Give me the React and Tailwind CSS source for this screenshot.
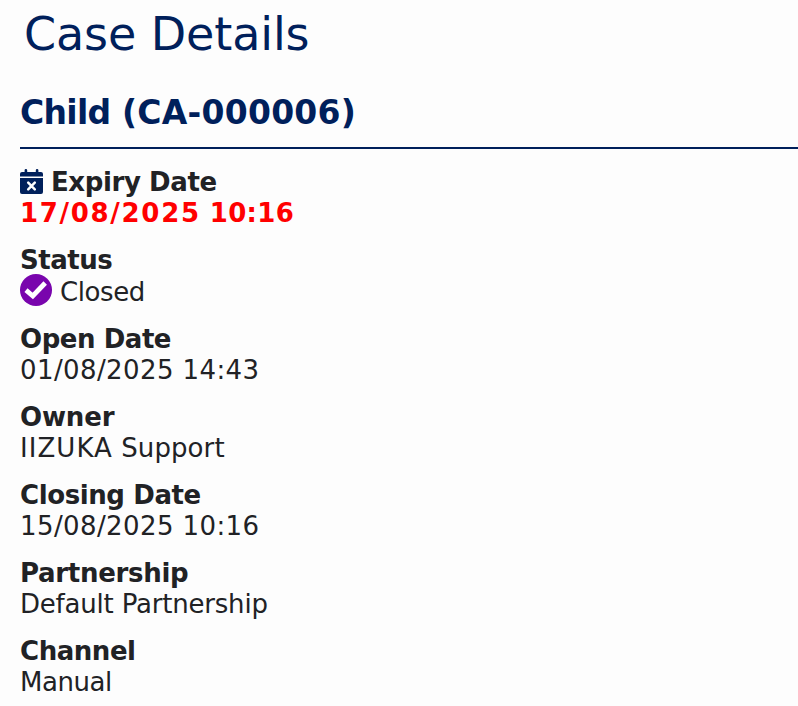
import React from 'react';

// Calendar with a cross, shown next to the expiry label
const CalendarTimesIcon = () => (
  <svg className="-mt-0.5 h-[25px] w-[23px] shrink-0" viewBox="0 0 23 25">
    <path
      d="M2 3H4.600V1.200Q4.600 0 5.900 0Q7.200 0 7.200 1.200V3H15.800V1.200Q15.800 0 17.100 0Q18.400 0 18.400 1.200V3H21Q23 3 23 5V7.600H0V5Q0 3 2 3Z"
      fill="#00205b"
    />
    <path d="M0 9H23V23Q23 25 21 25H2Q0 25 0 23Z" fill="#00205b" />
    <path d="M8.200 13.700L14.800 20.300M14.800 13.700L8.200 20.300" stroke="#fff" strokeWidth="2.500" strokeLinecap="round" />
  </svg>
);

const ClosedIcon = () => (
  <svg className="h-8 w-8 shrink-0" viewBox="0 0 32 32">
    <circle cx="16" cy="16" r="16" fill="#7905ad" />
    <path d="M6 16.200L12.800 22L25.200 9" fill="none" stroke="#fff" strokeWidth="4.800" />
  </svg>
);

const details = [
  { label: 'Open Date', value: '01/08/2025 14:43', labelClass: 'tracking-[-0.45px]', valueClass: 'tracking-[0.4px]' },
  {
    label: 'Owner',
    value: <><span className="tracking-[1.05px]">IIZUKA</span> Support</>,
    labelClass: 'tracking-[-0.15px]',
    valueClass: 'tracking-[0.1px]',
  },
  { label: 'Closing Date', value: '15/08/2025 10:16', labelClass: 'tracking-[-0.4px]', valueClass: 'tracking-[0.4px]' },
  { label: 'Partnership', value: 'Default Partnership', labelClass: 'tracking-[-0.3px]', valueClass: 'tracking-[-0.2px]' },
  { label: 'Channel', value: 'Manual', labelClass: 'tracking-[-0.45px]', valueClass: 'tracking-[-0.45px]' },
];

const App = () => {
  return (
    <div className="h-screen overflow-hidden bg-[#fdfdfd] pl-5 font-['Verdana','DejaVu_Sans',sans-serif] text-[26px] leading-[31px] text-[#212225]">
      <h1 className="pt-1 pl-1 text-[46px] leading-[60px] tracking-[-0.1px] text-[#00205b]">Case Details</h1>
      <h2 className="mt-[29px] border-b-2 border-[#00205b] pb-[14px] text-[33px] leading-[40px] font-bold text-[#00205b]">
        <span className="tracking-[-0.7px]">Child</span> <span className="tracking-[0.25px]">(CA-000006)</span>
      </h2>

      <div className="mt-[18px]">
        <div className="flex items-center gap-2 font-bold">
          <CalendarTimesIcon />
          <span className="tracking-[-0.4px]">Expiry Date</span>
        </div>
        <div className="font-bold text-[#ff0000]">
          <span className="tracking-[1.7px]">17/08/2025</span> <span className="tracking-[0.3px]">10:16</span>
        </div>
      </div>

      <div className="mt-4">
        <div className="font-bold tracking-[-0.5px]">Status</div>
        <div className="flex h-8 items-center gap-2">
          <span className="-mt-1"><ClosedIcon /></span>
          <span className="tracking-[-0.4px]">Closed</span>
        </div>
      </div>

      {details.map((item) => (
        <div key={item.label} className="mt-4">
          <div className={`font-bold ${item.labelClass}`}>{item.label}</div>
          <div className={item.valueClass}>{item.value}</div>
        </div>
      ))}
    </div>
  );
};

export default App;
